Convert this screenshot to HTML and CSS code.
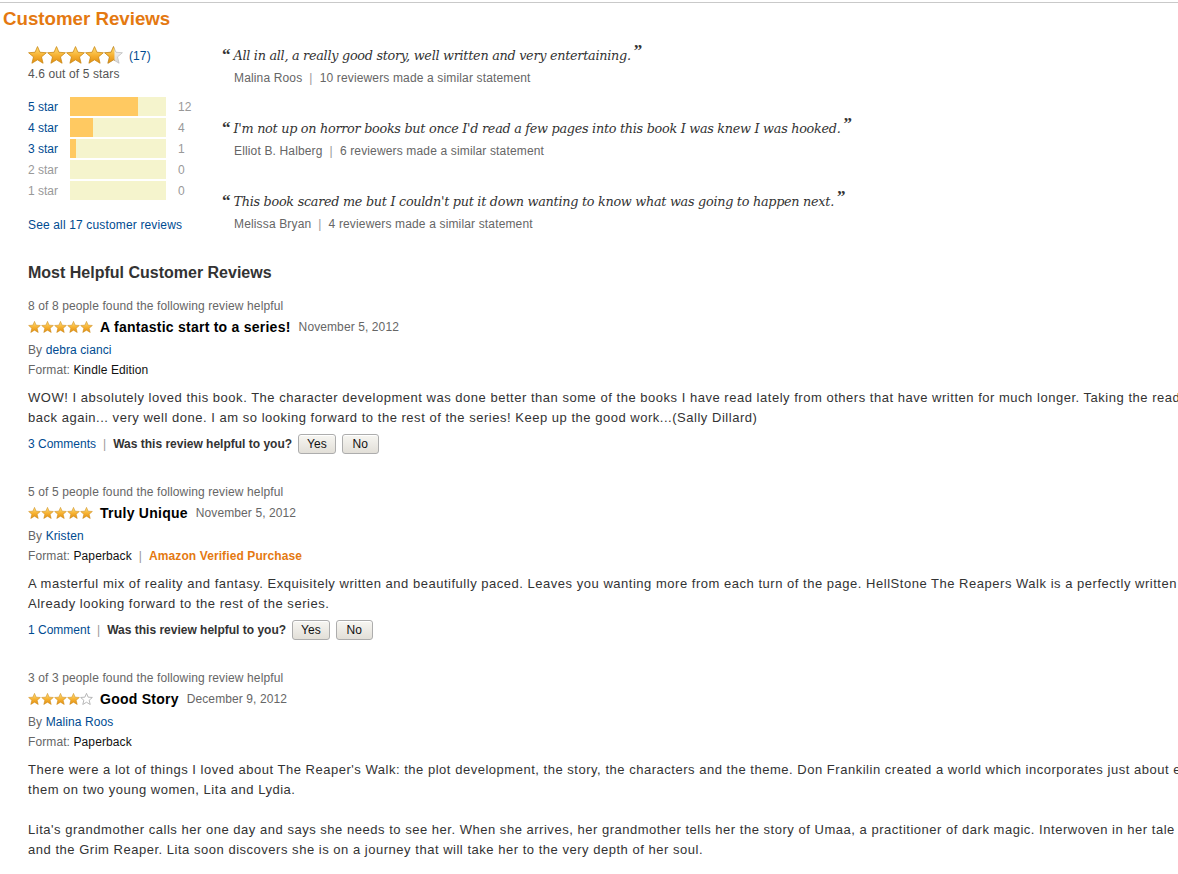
FILE: index.html
```html
<!DOCTYPE html>
<html>
<head>
<meta charset="utf-8">
<title>Customer Reviews</title>
<link rel="stylesheet" href="styles.css">
</head>
<body>
<svg class="defs" width="0" height="0" aria-hidden="true">
  <defs>
    <linearGradient id="gold" x1="0" y1="0" x2="0" y2="1">
      <stop offset="0" stop-color="#FFE07A"/>
      <stop offset="0.55" stop-color="#F6B030"/>
      <stop offset="1" stop-color="#E08E12"/>
    </linearGradient>
    <linearGradient id="grey" x1="0" y1="0" x2="0" y2="1">
      <stop offset="0" stop-color="#FAFAFA"/>
      <stop offset="1" stop-color="#D6D6D6"/>
    </linearGradient>
    <symbol id="star" viewBox="0 0 20 19">
      <path d="M10 0.6 L12.6 6.6 L19.4 7.1 L14.2 11.5 L15.9 18.2 L10 14.6 L4.1 18.2 L5.8 11.5 L0.6 7.1 L7.4 6.6 Z"/>
    </symbol>
    <clipPath id="part">
      <rect x="0" y="0" width="11" height="19"/>
    </clipPath>
  </defs>
</svg>

<div class="page">
  <h2 class="section-title">Customer Reviews</h2>

  <div class="summary">
    <div class="summary-left">
      <div class="overall">
        <span class="big-stars">
          <svg viewBox="0 0 20 19" class="bstar"><use href="#star" class="s-full"/></svg>
          <svg viewBox="0 0 20 19" class="bstar"><use href="#star" class="s-full"/></svg>
          <svg viewBox="0 0 20 19" class="bstar"><use href="#star" class="s-full"/></svg>
          <svg viewBox="0 0 20 19" class="bstar"><use href="#star" class="s-full"/></svg>
          <svg viewBox="0 0 20 19" class="bstar"><use href="#star" class="s-empty"/><use href="#star" class="s-full" clip-path="url(#part)"/></svg>
        </span>
        <a class="link count" href="#">(17)</a>
      </div>
      <div class="avg">4.6 out of 5 stars</div>

      <div class="histogram">
        <div class="hrow"><a class="hlabel link" href="#">5 star</a><span class="bar"><span class="fill" style="width:70.6%"></span></span><span class="hcount">12</span></div>
        <div class="hrow"><a class="hlabel link" href="#">4 star</a><span class="bar"><span class="fill" style="width:23.5%"></span></span><span class="hcount">4</span></div>
        <div class="hrow"><a class="hlabel link" href="#">3 star</a><span class="bar"><span class="fill" style="width:5.9%"></span></span><span class="hcount">1</span></div>
        <div class="hrow"><span class="hlabel muted">2 star</span><span class="bar"></span><span class="hcount">0</span></div>
        <div class="hrow"><span class="hlabel muted">1 star</span><span class="bar"></span><span class="hcount">0</span></div>
      </div>

      <a class="link see-all" href="#">See all 17 customer reviews</a>
    </div>

    <div class="quotes">
      <div class="quote">
        <p class="qtext"><span class="qmark">“</span>All in all, a really good story, well written and very entertaining.<span class="qmark close">”</span></p>
        <p class="qmeta">Malina Roos<span class="sep">|</span>10 reviewers made a similar statement</p>
      </div>
      <div class="quote">
        <p class="qtext"><span class="qmark">“</span>I'm not up on horror books but once I'd read a few pages into this book I was knew I was hooked.<span class="qmark close">”</span></p>
        <p class="qmeta">Elliot B. Halberg<span class="sep">|</span>6 reviewers made a similar statement</p>
      </div>
      <div class="quote">
        <p class="qtext"><span class="qmark">“</span>This book scared me but I couldn't put it down wanting to know what was going to happen next.<span class="qmark close">”</span></p>
        <p class="qmeta">Melissa Bryan<span class="sep">|</span>4 reviewers made a similar statement</p>
      </div>
    </div>
  </div>

  <h3 class="helpful-title">Most Helpful Customer Reviews</h3>

  <div class="review">
    <div class="helpful">8 of 8 people found the following review helpful</div>
    <div class="rhead">
      <span class="small-stars">
        <svg viewBox="0 0 20 19" class="sstar"><use href="#star" class="s-full"/></svg><svg viewBox="0 0 20 19" class="sstar"><use href="#star" class="s-full"/></svg><svg viewBox="0 0 20 19" class="sstar"><use href="#star" class="s-full"/></svg><svg viewBox="0 0 20 19" class="sstar"><use href="#star" class="s-full"/></svg><svg viewBox="0 0 20 19" class="sstar"><use href="#star" class="s-full"/></svg>
      </span>
      <span class="rtitle">A fantastic start to a series!</span>
      <span class="rdate">November 5, 2012</span>
    </div>
    <div class="by">By <a class="link" href="#">debra cianci</a></div>
    <div class="format">Format: <span class="fval">Kindle Edition</span></div>
    <div class="rbody">
      <p>WOW! I absolutely loved this book. The character development was done better than some of the books I have read lately from others that have written for much longer. Taking the reader on a journey there and<br>back again... very well done. I am so looking forward to the rest of the series! Keep up the good work...(Sally Dillard)</p>
    </div>
    <div class="ractions">
      <a class="link" href="#">3 Comments</a><span class="sep">|</span><b class="ask">Was this review helpful to you?</b><button class="vote">Yes</button><button class="vote">No</button>
    </div>
  </div>

  <div class="review">
    <div class="helpful">5 of 5 people found the following review helpful</div>
    <div class="rhead">
      <span class="small-stars">
        <svg viewBox="0 0 20 19" class="sstar"><use href="#star" class="s-full"/></svg><svg viewBox="0 0 20 19" class="sstar"><use href="#star" class="s-full"/></svg><svg viewBox="0 0 20 19" class="sstar"><use href="#star" class="s-full"/></svg><svg viewBox="0 0 20 19" class="sstar"><use href="#star" class="s-full"/></svg><svg viewBox="0 0 20 19" class="sstar"><use href="#star" class="s-full"/></svg>
      </span>
      <span class="rtitle">Truly Unique</span>
      <span class="rdate">November 5, 2012</span>
    </div>
    <div class="by">By <a class="link" href="#">Kristen</a></div>
    <div class="format">Format: <span class="fval">Paperback</span><span class="sep">|</span><b class="verified">Amazon Verified Purchase</b></div>
    <div class="rbody">
      <p>A masterful mix of reality and fantasy. Exquisitely written and beautifully paced. Leaves you wanting more from each turn of the page. HellStone The Reapers Walk is a perfectly written tale of the supernatural.<br>Already looking forward to the rest of the series.</p>
    </div>
    <div class="ractions">
      <a class="link" href="#">1 Comment</a><span class="sep">|</span><b class="ask">Was this review helpful to you?</b><button class="vote">Yes</button><button class="vote">No</button>
    </div>
  </div>

  <div class="review">
    <div class="helpful">3 of 3 people found the following review helpful</div>
    <div class="rhead">
      <span class="small-stars">
        <svg viewBox="0 0 20 19" class="sstar"><use href="#star" class="s-full"/></svg><svg viewBox="0 0 20 19" class="sstar"><use href="#star" class="s-full"/></svg><svg viewBox="0 0 20 19" class="sstar"><use href="#star" class="s-full"/></svg><svg viewBox="0 0 20 19" class="sstar"><use href="#star" class="s-full"/></svg><svg viewBox="0 0 20 19" class="sstar"><use href="#star" class="s-outline"/></svg>
      </span>
      <span class="rtitle">Good Story</span>
      <span class="rdate">December 9, 2012</span>
    </div>
    <div class="by">By <a class="link" href="#">Malina Roos</a></div>
    <div class="format">Format: <span class="fval">Paperback</span></div>
    <div class="rbody">
      <p>There were a lot of things I loved about The Reaper's Walk: the plot development, the story, the characters and the theme. Don Frankilin created a world which incorporates just about everything and centers<br>them on two young women, Lita and Lydia.</p>
      <p>Lita's grandmother calls her one day and says she needs to see her. When she arrives, her grandmother tells her the story of Umaa, a practitioner of dark magic. Interwoven in her tale are the Reapers<br>and the Grim Reaper. Lita soon discovers she is on a journey that will take her to the very depth of her soul.</p>
    </div>
  </div>
</div>
</body>
</html>
```

FILE: styles.css
```css
html, body {
  margin: 0;
  padding: 0;
  background: #fff;
  overflow: hidden;
}

body {
  font-family: "Liberation Sans", Arial, sans-serif;
  font-size: 13px;
  color: #333;
}

.defs {
  position: absolute;
  width: 0;
  height: 0;
}

.page {
  margin-top: 2px;
  border-top: 1px solid #c9c9c9;
  padding-top: 6px;
  width: 1600px;
}

.link {
  color: #004B91;
  text-decoration: none;
}

.sep {
  color: #999;
  margin: 0 7px;
}

.section-title {
  margin: 0 0 0 3px;
  font-size: 18.7px;
  line-height: 20px;
  font-weight: bold;
  color: #E47911;
}

/* ---------- summary ---------- */
.summary {
  display: flex;
  padding-left: 28px;
  margin-top: 16px;
}

.summary-left {
  width: 194px;
  flex: none;
}

.overall {
  display: flex;
  align-items: center;
  height: 19px;
}

.big-stars {
  display: flex;
}

.bstar {
  width: 19px;
  height: 18px;
  display: block;
}

.s-full {
  fill: url(#gold);
  stroke: #C98510;
  stroke-width: 0.8;
}

.s-empty {
  fill: url(#grey);
  stroke: #BDBDBD;
  stroke-width: 0.8;
}

.s-outline {
  fill: #fff;
  stroke: #A8A8A8;
  stroke-width: 1.3;
}

.count {
  font-size: 12px;
  margin-left: 6px;
  margin-top: 2px;
  letter-spacing: 0.1px;
}

.avg {
  font-size: 12px;
  line-height: 15px;
  color: #555;
  margin-top: 3px;
  letter-spacing: 0.12px;
}

.histogram {
  margin-top: 15px;
  display: flex;
  flex-direction: column;
  gap: 2px;
}

.hrow {
  display: flex;
  align-items: center;
  height: 19px;
  font-size: 12px;
}

.hlabel {
  width: 42px;
  flex: none;
}

.muted {
  color: #999;
}

.bar {
  width: 96px;
  height: 19px;
  background: #F5F4CD;
  display: block;
  flex: none;
}

.fill {
  display: block;
  height: 100%;
  background: #FFC961;
}

.hcount {
  margin-left: 12px;
  color: #999;
}

.see-all {
  display: block;
  margin-top: 18px;
  font-size: 12px;
  line-height: 15px;
  letter-spacing: 0.15px;
}

/* ---------- quotes ---------- */
.quote {
  height: 73px;
}

.quote:last-child {
  height: 56px;
}

.quote p {
  margin: 0;
}

.qtext {
  font-family: "DejaVu Serif", Georgia, serif;
  font-style: italic;
  font-size: 12.8px;
  line-height: 20px;
  color: #333;
  letter-spacing: -0.28px;
}

.qmark {
  font-family: "Liberation Serif", Georgia, serif;
  font-style: normal;
  font-weight: bold;
  font-size: 17px;
  color: #333;
  margin-right: 3px;
  letter-spacing: 0;
}

.qmark.close {
  margin-left: 3px;
  margin-right: 0;
  position: relative;
  top: -4px;
}

.qmeta {
  font-size: 12px;
  line-height: 15px;
  color: #666;
  padding-left: 12px;
  margin-top: 5px !important;
  letter-spacing: 0.15px;
}

/* ---------- helpful reviews ---------- */
.helpful-title {
  margin: 16px 0 0 28px;
  font-size: 16px;
  line-height: 20px;
  font-weight: bold;
  color: #333;
}

.review {
  padding-left: 28px;
  margin-top: 15px;
}

.review + .review {
  margin-top: 30px;
}

.helpful {
  font-size: 12px;
  line-height: 16px;
  color: #666;
  letter-spacing: 0.12px;
}

.rhead {
  display: flex;
  align-items: center;
  height: 20px;
  margin-top: 3px;
}

.small-stars {
  display: flex;
}

.sstar {
  width: 13px;
  height: 12px;
  display: block;
}

.rtitle {
  font-weight: bold;
  font-size: 14px;
  color: #000;
  margin-left: 7px;
  letter-spacing: 0.25px;
}

.rdate {
  font-size: 12px;
  color: #666;
  margin-left: 8px;
  letter-spacing: 0.1px;
}

.by, .format {
  font-size: 12px;
  line-height: 16px;
  color: #666;
  letter-spacing: 0.1px;
}

.by {
  margin-top: 5px;
}

.format {
  margin-top: 4px;
}

.fval {
  color: #111;
}

.verified {
  color: #E47911;
}

.rbody {
  margin-top: 10px;
}

.rbody p {
  margin: 0;
  font-size: 13px;
  line-height: 20px;
  color: #333;
  white-space: nowrap;
  letter-spacing: 0.52px;
}

.rbody p + p {
  margin-top: 20px;
}

.ractions {
  display: flex;
  align-items: center;
  font-size: 12px;
  margin-top: 5px;
  height: 21px;
}

.ask {
  color: #333;
  margin-right: 6px;
}

.vote {
  font-family: "Liberation Sans", Arial, sans-serif;
  font-size: 12px;
  color: #111;
  height: 20px;
  min-width: 37px;
  padding: 0 8px;
  margin-right: 6px;
  border: 1px solid #ADADAD;
  border-radius: 3px;
  background: linear-gradient(#F7F6F2, #E2DFD8);
  box-shadow: inset 0 1px 0 #fff;
  cursor: pointer;
}
```
